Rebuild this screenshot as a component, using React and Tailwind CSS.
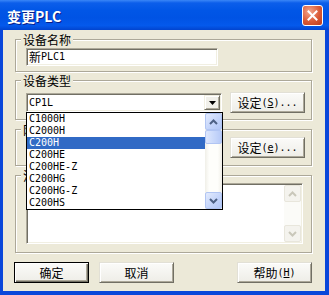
import React from "react";

const LAT = "font-['DejaVu_Sans_Mono',monospace] text-[10px] leading-[14px]";
const CJ = "font-['Noto_Sans_CJK_SC',sans-serif] text-[12px] leading-[14px]";
const CJK_RE = /[\u2E80-\u9FFF\uF900-\uFAFF\uFF00-\uFFEF\u3000-\u303F]/;

function T({ s }) {
  const runs = [];
  for (const ch of s) {
    const c = CJK_RE.test(ch);
    const last = runs[runs.length - 1];
    if (last && last.c === c) last.t += ch;
    else runs.push({ c, t: ch });
  }
  return (
    <>
      {runs.map((r, i) => (
        <span key={i} className={r.c ? CJ : LAT}>
          {r.t}
        </span>
      ))}
    </>
  );
}

function Acc({ pre, k, post }) {
  return (
    <>
      <T s={pre} />
      <span className={`${LAT} underline underline-offset-[1px]`}>{k}</span>
      <T s={post} />
    </>
  );
}

function Group({ label, className = "", children }) {
  return (
    <fieldset
      className={`min-w-0 border border-[#ACA899] shadow-[inset_1px_1px_0_#fff,1px_1px_0_#fff] ${className}`}
    >
      <legend className="ml-[5px] h-[15px] px-[2px] bg-[#ECE9D8] whitespace-nowrap flex items-center">
        <span className="font-['Noto_Sans_CJK_SC',sans-serif] text-[12px] leading-[15px] text-black">{label}</span>
      </legend>
      {children}
    </fieldset>
  );
}

function Sunken({ className = "", children }) {
  return (
    <div
      className={`bg-white border border-t-[#ACA899] border-l-[#ACA899] border-b-white border-r-white shadow-[inset_1px_1px_0_#716F64,inset_-1px_-1px_0_#F1EFE2] ${className}`}
    >
      {children}
    </div>
  );
}

function Btn({ className = "", def = false, children }) {
  return (
    <div
      className={`flex items-center justify-center h-[21px] w-[75px] shrink-0 bg-[linear-gradient(180deg,#FBFBF9,#EEEDE7)] text-black ${
        def
          ? "border border-black shadow-[inset_1px_1px_0_#fff,inset_-1px_-1px_0_#716F64,inset_-2px_-2px_0_#ACA899]"
          : "border border-t-[#E2E0D6] border-l-[#E2E0D6] border-b-[#716F64] border-r-[#716F64] shadow-[inset_1px_1px_0_#fff,inset_-1px_-1px_0_#ACA899]"
      } ${className}`}
    >
      <span className="whitespace-nowrap flex items-center">{children}</span>
    </div>
  );
}

function ComboArrow() {
  return (
    <div className="w-[16px] h-full shrink-0 flex items-center justify-center bg-[#F1F0EA] border border-t-[#F1EFE2] border-l-[#F1EFE2] border-b-[#716F64] border-r-[#716F64] shadow-[inset_1px_1px_0_#fff,inset_-1px_-1px_0_#ACA899]">
      <svg width="7" height="4" viewBox="0 0 7 4">
        <polygon points="0,0 7,0 3.5,4" fill="#000" />
      </svg>
    </div>
  );
}

function Chevron({ up, color }) {
  return (
    <svg width="9" height="6" viewBox="0 0 9 6">
      <polyline
        points={up ? "1,5 4.5,1.5 8,5" : "1,1 4.5,4.5 8,1"}
        fill="none"
        stroke={color}
        strokeWidth="2"
      />
    </svg>
  );
}

function SbBtn({ up }) {
  return (
    <div className="w-[17px] h-[17px] shrink-0 rounded-[2px] border border-[#B1C5F3] bg-[linear-gradient(135deg,#E3EBFD,#C2D3FA_60%,#B2C7F6)] flex items-center justify-center">
      <Chevron up={up} color="#4D6185" />
    </div>
  );
}

function SbBtnDis({ up }) {
  return (
    <div className="w-[17px] h-[17px] shrink-0 rounded-[2px] border border-[#E8E6DC] bg-[#F4F3EE] flex items-center justify-center">
      <Chevron up={up} color="#C9C7BA" />
    </div>
  );
}

const ITEMS = ["C1000H", "C2000H", "C200H", "C200HE", "C200HE-Z", "C200HG", "C200HG-Z", "C200HS"];

export default function App() {
  return (
    <div className="w-[329px] h-[295px] flex flex-col bg-[#0A47DA] overflow-hidden select-none">
      {/* Title bar */}
      <div className="h-[30px] shrink-0 flex items-center pl-[7px] pr-[6px] bg-[linear-gradient(180deg,#3A86F7_0%,#0C5EEA_10%,#0156E6_35%,#0053E4_60%,#0459EC_85%,#0244CF_100%)]">
        <span className="pt-[1px] font-['Noto_Sans_CJK_SC',sans-serif] font-bold text-[14px] leading-[16px] text-white [text-shadow:1px_1px_0_#0A1E8A]">
          变更PLC
        </span>
        <div className="ml-auto w-[21px] h-[21px] rounded-[3px] border border-white bg-[radial-gradient(circle_at_35%_30%,#F2A78E,#DA5A36_55%,#BC3B1B)] flex items-center justify-center">
          <svg width="11" height="11" viewBox="0 0 11 11">
            <path d="M1.5 1.5 L9.5 9.5 M9.5 1.5 L1.5 9.5" stroke="#fff" strokeWidth="2" strokeLinecap="square" />
          </svg>
        </div>
      </div>

      {/* Client */}
      <div className="relative flex-1 ml-[3px] mr-[4px] mb-[4px] bg-[#ECE9D8] flex flex-col pl-[12px] pr-[13px] text-black">
        {/* 设备名称 */}
        <Group label="设备名称" className="mt-[2px] pb-[5px]">
          <div className="pl-[10px] mt-[1px]">
            <Sunken className="w-[192px] h-[18px] flex items-center pl-[2px]">
              <T s="新PLC1" />
            </Sunken>
          </div>
        </Group>

        {/* 设备类型 */}
        <Group label="设备类型" className="mt-[1px] pb-[6px]">
          <div className="mt-[4px] h-[21px] flex items-center pl-[10px] pr-[6px]">
            <Sunken className="w-[196px] h-[19px] p-[1px] flex items-center">
              <div className="flex-1 pl-[1px] flex items-center">
                <T s="CP1L" />
              </div>
              <ComboArrow />
            </Sunken>
            <Btn className="ml-auto">
              <Acc pre="设定(" k="S" post=")..." />
            </Btn>
          </div>
        </Group>

        {/* 网络类型 */}
        <Group label="网络类型" className="mt-[2px] pb-[7px]">
          <div className="h-[21px] flex items-center pl-[10px] pr-[6px]">
            <Sunken className="w-[196px] h-[19px] p-[1px] flex items-center justify-end">
              <ComboArrow />
            </Sunken>
            <Btn className="ml-auto">
              <Acc pre="设定(" k="e" post=")..." />
            </Btn>
          </div>
        </Group>

        {/* 注释 */}
        <Group label="注释" className="mt-[2px] pb-[8px]">
          <div className="pl-[10px]">
            <Sunken className="w-[277px] h-[61px] p-[1px] flex">
              <div className="flex-1" />
              <div className="w-[17px] flex flex-col bg-[#FBFBF8]">
                <SbBtnDis up />
                <div className="flex-1" />
                <SbBtnDis />
              </div>
            </Sunken>
          </div>
        </Group>

        {/* Buttons */}
        <div className="mt-[9px] -ml-[1px] flex">
          <Btn def>
            <T s="确定" />
          </Btn>
          <Btn className="ml-[10px]">
            <T s="取消" />
          </Btn>
          <Btn className="ml-auto">
            <Acc pre="帮助(" k="H" post=")" />
          </Btn>
        </div>

        {/* Dropdown list overlay */}
        <div className="absolute left-[23px] top-[82px] w-[197px] h-[98px] border border-black bg-white flex">
          <div className="flex-1 flex flex-col">
            {ITEMS.map((it) => (
              <div
                key={it}
                className={`h-[12px] pl-[2px] flex items-center ${
                  it === "C200H" ? "bg-[#316AC5] text-white" : "text-black"
                }`}
              >
                <span className="font-['DejaVu_Sans_Mono',monospace] text-[10px] leading-[12px]">{it}</span>
              </div>
            ))}
          </div>
          <div className="w-[17px] flex flex-col bg-[linear-gradient(90deg,#F0EFE8,#FEFEFB_25%,#FEFEFB_75%,#F0EFE8)]">
            <SbBtn up />
            <div className="w-[17px] h-[14px] rounded-[2px] border border-[#B1C5F3] bg-[linear-gradient(90deg,#DDE7FD,#C6D6FA_60%,#B7CAF7)]" />
            <div className="flex-1" />
            <SbBtn />
          </div>
        </div>
      </div>
    </div>
  );
}
